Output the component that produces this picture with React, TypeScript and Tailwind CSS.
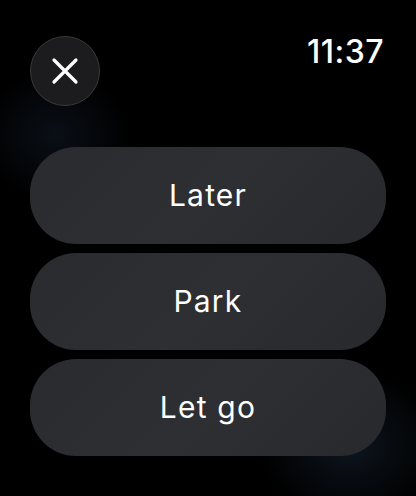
import React from "react";

export default function App() {
  const labels = ["Later", "Park", "Let go"];
  return (
    <div
      className="relative w-[416px] h-[496px] overflow-hidden bg-black text-white"
      style={{ fontFamily: "Inter, Roboto, 'Noto Sans', sans-serif" }}
    >
      <div className="pointer-events-none absolute left-[-20px] top-[70px] w-[150px] h-[130px] rounded-full bg-[radial-gradient(closest-side,rgba(40,60,90,0.25),rgba(0,0,0,0))]" />
      <div className="pointer-events-none absolute left-[260px] top-[370px] w-[180px] h-[150px] rounded-full bg-[radial-gradient(closest-side,rgba(45,70,100,0.3),rgba(0,0,0,0))]" />
      <div className="relative flex flex-col px-[30px]">
        <div className="flex items-start justify-between pt-[36px] h-[147px]">
          <button className="flex h-[70px] w-[70px] items-center justify-center rounded-full border-[1.5px] border-[#3a3a3d] bg-[#1c1c1e]">
            <svg width="30" height="30" viewBox="0 0 30 30" fill="none">
              <path d="M4 4 L26 26 M26 4 L4 26" stroke="white" strokeWidth="3.2" strokeLinecap="round" />
            </svg>
          </button>
          <div className="mt-[-2px] mr-[2px] text-[32px] font-medium leading-[36px] tracking-[0.5px]">11:37</div>
        </div>
        <div className="flex flex-col gap-[9px]">
          {labels.map((l) => (
            <button
              key={l}
              className="flex h-[97px] w-[356px] items-center justify-center rounded-[46px] bg-[linear-gradient(135deg,#2a2b2e,#2e2f33_50%,#28292c)] text-[30px] font-normal tracking-[1.2px] text-white"
            >
              {l}
            </button>
          ))}
        </div>
      </div>
    </div>
  );
}
